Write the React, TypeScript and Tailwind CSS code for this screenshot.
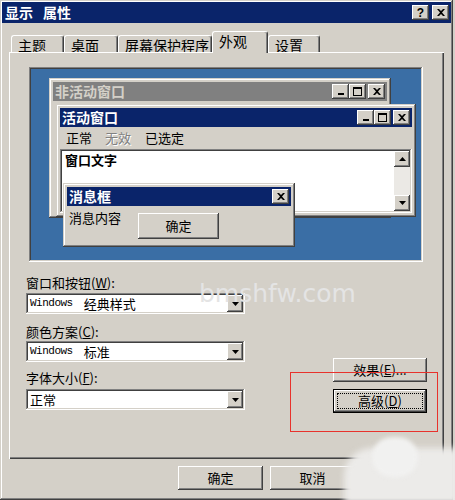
import type { ReactNode } from "react";

// classic 3D bevels
const raised =
  "shadow-[inset_-1px_-1px_#404040,inset_1px_1px_#ffffff,inset_-2px_-2px_#808080,inset_2px_2px_#d4d0c8]";
const frame =
  "shadow-[inset_-1px_-1px_#404040,inset_1px_1px_#d4d0c8,inset_-2px_-2px_#808080,inset_2px_2px_#ffffff]";
const sunken =
  "shadow-[inset_-1px_-1px_#ffffff,inset_1px_1px_#808080,inset_-2px_-2px_#d4d0c8,inset_2px_2px_#404040]";

const cjk = "font-['Noto_Sans_CJK_SC',sans-serif]";

const CloseGlyph = () => (
  <svg width="8" height="7" viewBox="0 0 8 7">
    <path d="M0 0h2l2 2 2-2h2L5 3.5 8 7H6L4 5 2 7H0l3-3.5z" fill="#000" />
  </svg>
);

const MinGlyph = () => (
  <svg width="8" height="7" viewBox="0 0 8 7">
    <rect x="1" y="5" width="6" height="2" fill="#000" />
  </svg>
);

const MaxGlyph = () => (
  <svg width="9" height="9" viewBox="0 0 9 9">
    <path d="M0 0h9v9H0zM1 2v6h7V2z" fill="#000" fillRule="evenodd" />
  </svg>
);

const Triangle = ({ up = false }: { up?: boolean }) => (
  <svg width="7" height="4" viewBox="0 0 7 4">
    <path d={up ? "M0 4h7L3.5 0z" : "M0 0h7L3.5 4z"} fill="#000" />
  </svg>
);

const CapBtn = ({ children }: { children: ReactNode }) => (
  <div className={`w-[17px] h-[15px] flex items-center justify-center bg-[#d4d0c8] ${raised}`}>
    {children}
  </div>
);

const WinButtons = () => (
  <div className="flex items-center pr-[2px]">
    <CapBtn>
      <MinGlyph />
    </CapBtn>
    <CapBtn>
      <MaxGlyph />
    </CapBtn>
    <div className="ml-[2px]">
      <CapBtn>
        <CloseGlyph />
      </CapBtn>
    </div>
  </div>
);

const Combo = ({ children }: { children: ReactNode }) => (
  <div className={`flex items-center h-[21px] w-[219px] bg-white p-[2px] ${sunken}`}>
    <div className="flex-1 flex items-center pl-[2px] text-[13px] leading-[17px]">{children}</div>
    <div className={`w-[16px] h-[17px] flex items-center justify-center bg-[#d4d0c8] ${raised}`}>
      <Triangle />
    </div>
  </div>
);

const Btn = ({ children, className = "" }: { children: ReactNode; className?: string }) => (
  <div className={`h-[24px] flex items-center justify-center bg-[#d4d0c8] text-[13px] ${raised} ${className}`}>
    {children}
  </div>
);

const Latin = ({ children }: { children: ReactNode }) => (
  <span className="font-['Liberation_Mono',monospace] text-[11px] tracking-[-0.5px] mr-[11px]">{children}</span>
);

const tabs = [
  { label: "主题", w: "w-[53px]" },
  { label: "桌面", w: "w-[54px]" },
  { label: "屏幕保护程序", w: "w-[94px]" },
  { label: "外观", w: "w-[56px]", active: true },
  { label: "设置", w: "w-[52px]" },
];

export default function App() {
  return (
    <div className={`relative w-[455px] h-[500px] overflow-hidden bg-[#d4d0c8] text-black ${cjk}`}>
      <div className={`w-[453px] h-[500px] flex flex-col ${frame}`}>
        {/* title bar */}
        <div className="mx-[2px] mt-[2px] h-[21px] bg-[#0a246a] flex items-center justify-between">
          <div className="pl-[3px] flex text-white font-bold text-[14px] leading-[21px]">
            <span>显示</span>
            <span className="ml-[10px]">属性</span>
          </div>
          <div className="flex items-center gap-[3px] pr-[2px]">
            <div className={`w-[17px] h-[15px] flex items-center justify-center bg-[#d4d0c8] ${raised}`}>
              <span className="font-['Liberation_Sans',sans-serif] font-bold text-[12px] leading-none">?</span>
            </div>
            <div className={`w-[17px] h-[15px] flex items-center justify-center bg-[#d4d0c8] ${raised}`}>
              <CloseGlyph />
            </div>
          </div>
        </div>

        {/* tabs */}
        <div className="ml-[11px] mt-[8px] flex items-end">
          {tabs.map((t) =>
            t.active ? (
              <div
                key={t.label}
                className={`${t.w} relative z-10 h-[22px] -mb-[1px] bg-[#d4d0c8] border-t border-l border-r border-t-white border-l-white border-r-[#404040] rounded-t-[3px] shadow-[inset_-1px_0_#808080] pl-[6px] pt-[1px] text-[14px] leading-[17px]`}
              >
                {t.label}
              </div>
            ) : (
              <div
                key={t.label}
                className={`${t.w} h-[17px] bg-[#d4d0c8] border-t border-l border-r border-t-white border-l-white border-r-[#404040] rounded-t-[3px] shadow-[inset_-1px_0_#808080] pl-[6px] pt-[1px] text-[14px] leading-[16px]`}
              >
                {t.label}
              </div>
            ),
          )}
        </div>

        {/* tab page */}
        <div className="ml-[9px] w-[435px] h-[407px] bg-[#d4d0c8] flex flex-col shadow-[inset_1px_1px_#ffffff,inset_-1px_-1px_#404040,inset_-2px_-2px_#808080]">
          {/* preview desktop */}
          <div className={`ml-[20px] mt-[15px] w-[394px] h-[195px] p-[2px] ${sunken}`}>
            <div className="relative w-full h-full bg-[#3a6ea5]">
              {/* inactive window */}
              <div className={`absolute left-[18px] top-[9px] w-[342px] h-[140px] bg-[#d4d0c8] p-[4px] ${frame}`}>
                <div className="h-[19px] bg-[#808080] flex items-center justify-between">
                  <span className="pl-[2px] text-[14px] font-bold text-[#d4d0c8] leading-[19px]">非活动窗口</span>
                  <WinButtons />
                </div>
              </div>

              {/* active window */}
              <div className={`absolute left-[25px] top-[35px] w-[360px] h-[113px] bg-[#d4d0c8] p-[4px] flex flex-col ${frame}`}>
                <div className="h-[19px] bg-[#0a246a] flex items-center justify-between">
                  <span className="pl-[2px] text-[14px] font-bold text-white leading-[19px]">活动窗口</span>
                  <WinButtons />
                </div>
                <div className="h-[22px] flex items-center text-[13px]">
                  <span className="px-[6px]">正常</span>
                  <span className="px-[7px] text-[#808080] [text-shadow:1px_1px_0_#ffffff]">无效</span>
                  <span className="px-[7px]">已选定</span>
                </div>
                <div className={`flex-1 flex bg-white p-[2px] ${sunken}`}>
                  <div className="flex-1 pl-[3px] pt-[1px] text-[13px] font-bold leading-[16px]">窗口文字</div>
                  <div className="w-[16px] flex flex-col bg-[#ebe9e5]">
                    <div className={`h-[16px] flex items-center justify-center bg-[#d4d0c8] ${raised}`}>
                      <Triangle up />
                    </div>
                    <div className="flex-1" />
                    <div className={`h-[16px] flex items-center justify-center bg-[#d4d0c8] ${raised}`}>
                      <Triangle />
                    </div>
                  </div>
                </div>
              </div>

              {/* message box */}
              <div className={`absolute left-[32px] top-[114px] w-[232px] h-[64px] bg-[#d4d0c8] p-[4px] flex flex-col ${frame}`}>
                <div className="h-[19px] bg-[#0a246a] flex items-center justify-between">
                  <span className="pl-[2px] text-[14px] font-bold text-white leading-[19px]">消息框</span>
                  <div className="pr-[2px]">
                    <CapBtn>
                      <CloseGlyph />
                    </CapBtn>
                  </div>
                </div>
                <div className="flex items-start">
                  <span className="pl-[2px] mt-[3px] text-[13px] leading-[18px]">消息内容</span>
                  <Btn className="ml-[17px] mt-[7px] w-[81px] h-[26px]">确定</Btn>
                </div>
              </div>
            </div>
          </div>

          {/* settings */}
          <div className="flex mt-[13px]">
            <div className="ml-[17px] w-[219px] flex flex-col text-[13px]">
              <div className="leading-[16px]">
                窗口和按钮(<u>W</u>):
              </div>
              <div className="mt-[2px]">
                <Combo>
                  <Latin>Windows</Latin>
                  <span>经典样式</span>
                </Combo>
              </div>
              <div className="mt-[10px] leading-[16px]">
                颜色方案(<u>C</u>):
              </div>
              <div className="mt-[1px]">
                <Combo>
                  <Latin>Windows</Latin>
                  <span>标准</span>
                </Combo>
              </div>
              <div className="mt-[8px] leading-[16px]">
                字体大小(<u>F</u>):
              </div>
              <div className="mt-[3px]">
                <Combo>
                  <span>正常</span>
                </Combo>
              </div>
            </div>

            <div className="ml-auto mr-[17px] w-[94px] flex flex-col">
              <Btn className="mt-[83px] w-[94px]">
                效果(<u>E</u>)...
              </Btn>
              <div className="mt-[7px] h-[24px] w-[94px] border border-black">
                <div className={`relative h-full flex items-center justify-center bg-[#d4d0c8] text-[13px] ${raised}`}>
                  <span className="absolute inset-[3px] border border-dotted border-black" />
                  高级(<u>D</u>)
                </div>
              </div>
            </div>
          </div>
        </div>

        {/* dialog buttons */}
        <div className="flex mt-[7px] ml-[178px] gap-[7px]">
          <Btn className="w-[85px]">确定</Btn>
          <Btn className="w-[85px]">取消</Btn>
        </div>
      </div>

      {/* site watermark */}
      <div className="absolute left-[199px] top-[281px] font-['DejaVu_Sans',sans-serif] text-[25px] leading-none text-[#e4e4e4]">
        bmshfw.com
      </div>
      <div className="absolute left-[344px] top-[448px] w-[115px] h-[56px] rounded-tl-[28px] bg-[#ecebe9] blur-[3px]" />
      <div className="absolute left-[372px] top-[437px] w-[46px] h-[40px] rounded-full bg-[#f1f1f0] blur-[2px]" />

      {/* highlight box */}
      <div className="absolute left-[290px] top-[372px] w-[148px] h-[60px] border border-[#e8322c]" />
    </div>
  );
}
